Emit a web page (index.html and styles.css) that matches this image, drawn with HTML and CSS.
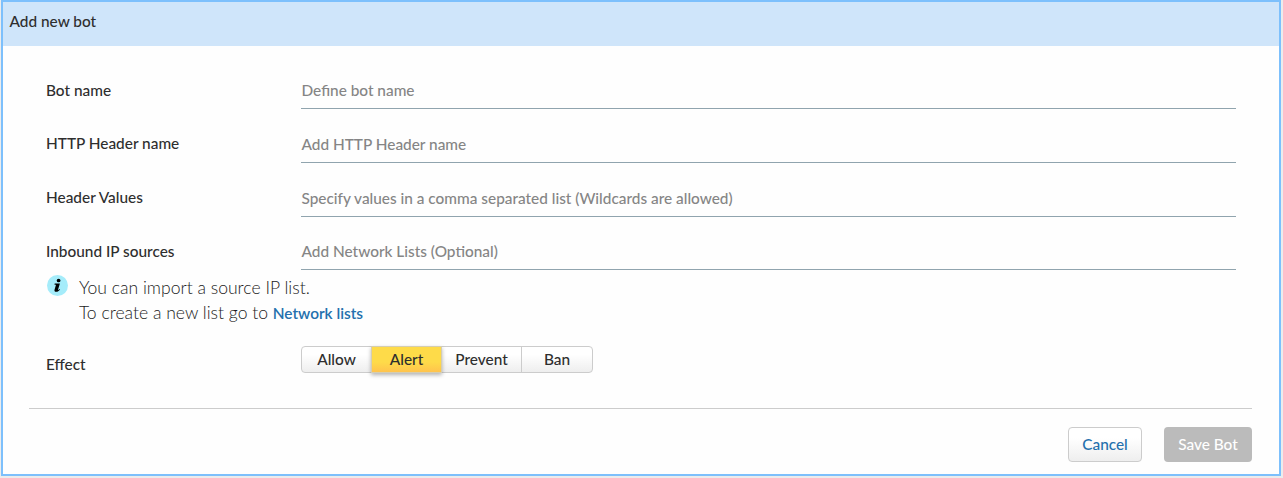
FILE: index.html
```html
<!DOCTYPE html>
<html lang="en">
<head>
<meta charset="utf-8">
<title>Add new bot</title>
<link rel="stylesheet" href="styles.css">
</head>
<body>
<section class="dialog">
  <header class="dialog-header">Add new bot</header>
  <form class="form">
    <div class="row"><label class="label">Bot name</label><div class="field">Define bot name</div></div>
    <div class="row"><label class="label label-high">HTTP Header name</label><div class="field">Add HTTP Header name</div></div>
    <div class="row row-short"><label class="label label-high">Header Values</label><div class="field">Specify values in a comma separated list (Wildcards are allowed)</div></div>
    <div class="row row-short"><label class="label">Inbound IP sources</label><div class="field">Add Network Lists (Optional)</div></div>
    <div class="hint">
      <svg class="info" viewBox="0 0 21 21" width="21" height="21"><circle cx="10.5" cy="10.5" r="10.5" fill="#a5ecfa"/><circle cx="11.6" cy="5.5" r="1.85"/><path d="M7.7 8.4h5.2l-1.8 6c-.2.7.3.7 1.5-.4l.5.5c-1.3 1.8-2.5 2.3-3.8 2.3-1.7 0-2.1-1-1.7-2.4l1.4-4.7H7.5z"/></svg>
      <p class="hint-text">You can import a source IP list.<br>To create a new list go to <a class="link">Network lists</a></p>
    </div>
    <div class="effect">
      <label class="effect-label">Effect</label>
      <div class="segments">
        <span class="seg seg-allow">Allow</span><span class="seg seg-alert">Alert</span><span class="seg seg-prevent">Prevent</span><span class="seg seg-ban">Ban</span>
      </div>
    </div>
  </form>
  <footer class="footer">
    <button class="btn cancel">Cancel</button>
    <button class="btn save">Save Bot</button>
  </footer>
</section>
</body>
</html>
```
FILE: styles.css
```css
* { box-sizing: border-box; }
body { margin: 0; padding: 0 2px 0 1px; background: #ececec; font-family: Lato, sans-serif; font-size: 15.38px; color: #2e2e2e; overflow: hidden; }
.dialog { height: 476px; border: 2px solid #7dc0fc; display: flex; flex-direction: column; background: #fefefe; }
.dialog-header { height: 44px; background: #cfe5fa; padding: 0 6.5px; line-height: 39px; font-weight: 500; }
.form { padding: 27px 43px 0; height: 362px; }
.row { display: flex; height: 54px; }
.row-short { height: 53px; }
.label, .effect-label { width: 255px; line-height: 34px; font-weight: 500; }
.label-high { line-height: 32px; }
.field { flex: 1; height: 36px; border-bottom: 1px solid #90a4ae; line-height: 34px; padding-left: .5px; color: #858585; font-weight: 500; }
.hint { display: flex; margin-top: -12px; height: 67px; }
.info { flex: none; margin: .4px 10.9px 0 1px; }
.hint-text { margin: 0; font-size: 17.57px; line-height: 25px; font-weight: 300; color: #1c1c1c; }
.link { color: #2470ad; font-size: 15.38px; font-weight: 600; }
.effect { display: flex; }
.effect-label { padding-top: 5px; }
.segments { display: flex; height: 27px; margin-top: 4px; border: 1px solid #ccc; border-radius: 4px; background: linear-gradient(#fff 30%, #eee); }
.seg { line-height: 25px; text-align: center; border-right: 1px solid #ccc; font-weight: 500; }
.seg-allow { width: 69px; border: 0; }
.seg-alert { width: 71px; height: 27px; margin-top: -1px; line-height: 25px; background: linear-gradient(#fedb49 60%, #ffc34d); border: 1px solid #d5cdb0; box-shadow: 0 2px 4px rgba(0,0,0,.3); }
.seg-prevent { width: 80px; }
.seg-ban { width: 70px; border: 0; }
.footer { height: 66px; margin: 0 27px 0 26px; border-top: 1px solid #ccc; display: flex; justify-content: flex-end; gap: 22px; padding-top: 18px; }
.btn { font: 500 15.38px Lato, sans-serif; height: 35px; border-radius: 4px; padding: 0 0 1px; }
.cancel { width: 74px; border: 1px solid #ccc; background: linear-gradient(#fff 30%, #eee); color: #2470ad; }
.save { width: 88px; border: 0; background: #bbb; color: #fff; }
```
